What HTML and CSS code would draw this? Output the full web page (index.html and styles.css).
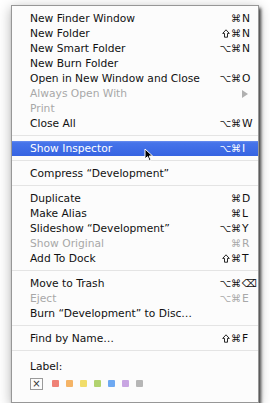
FILE: index.html
```html
<!DOCTYPE html>
<html lang="en">
<head>
  <meta charset="UTF-8">
  <title>Finder File Menu</title>
  <link rel="stylesheet" href="styles.css">
</head>
<body>
  <div class="menu">
    <div class="item"><span class="label">New Finder Window</span><span class="keys"><span class="mods">⌘</span><span class="key">N</span></span></div>
    <div class="item"><span class="label">New Folder</span><span class="keys"><svg class="shift" width="8" height="9" viewBox="0 0 8 9"><path d="M4 0.8 L7.3 4.4 L5.5 4.4 L5.5 8.2 L2.5 8.2 L2.5 4.4 L0.7 4.4 Z" fill="none" stroke="currentColor" stroke-width="0.9" stroke-linejoin="round"/></svg><span class="mods">⌘</span><span class="key">N</span></span></div>
    <div class="item"><span class="label">New Smart Folder</span><span class="keys"><span class="mods">⌥⌘</span><span class="key">N</span></span></div>
    <div class="item"><span class="label">New Burn Folder</span></div>
    <div class="item"><span class="label">Open in New Window and Close</span><span class="keys"><span class="mods">⌥⌘</span><span class="key">O</span></span></div>
    <div class="item disabled"><span class="label">Always Open With</span><span class="arrow"></span></div>
    <div class="item disabled"><span class="label">Print</span></div>
    <div class="item"><span class="label">Close All</span><span class="keys"><span class="mods">⌥⌘</span><span class="key">W</span></span></div>
    <div class="separator"></div>
    <div class="item selected"><span class="label">Show Inspector</span><span class="keys"><span class="mods">⌥⌘</span><span class="key">I</span></span></div>
    <div class="separator"></div>
    <div class="item"><span class="label">Compress “Development”</span></div>
    <div class="separator"></div>
    <div class="item"><span class="label">Duplicate</span><span class="keys"><span class="mods">⌘</span><span class="key">D</span></span></div>
    <div class="item"><span class="label">Make Alias</span><span class="keys"><span class="mods">⌘</span><span class="key">L</span></span></div>
    <div class="item"><span class="label">Slideshow “Development”</span><span class="keys"><span class="mods">⌥⌘</span><span class="key">Y</span></span></div>
    <div class="item disabled"><span class="label">Show Original</span><span class="keys"><span class="mods">⌘</span><span class="key">R</span></span></div>
    <div class="item"><span class="label">Add To Dock</span><span class="keys"><svg class="shift" width="8" height="9" viewBox="0 0 8 9"><path d="M4 0.8 L7.3 4.4 L5.5 4.4 L5.5 8.2 L2.5 8.2 L2.5 4.4 L0.7 4.4 Z" fill="none" stroke="currentColor" stroke-width="0.9" stroke-linejoin="round"/></svg><span class="mods">⌘</span><span class="key">T</span></span></div>
    <div class="separator"></div>
    <div class="item"><span class="label">Move to Trash</span><span class="keys"><span class="mods">⌥⌘</span><span class="key">⌫</span></span></div>
    <div class="item disabled"><span class="label">Eject</span><span class="keys"><span class="mods">⌥⌘</span><span class="key">E</span></span></div>
    <div class="item"><span class="label">Burn “Development” to Disc…</span></div>
    <div class="separator"></div>
    <div class="item"><span class="label">Find by Name…</span><span class="keys"><svg class="shift" width="8" height="9" viewBox="0 0 8 9"><path d="M4 0.8 L7.3 4.4 L5.5 4.4 L5.5 8.2 L2.5 8.2 L2.5 4.4 L0.7 4.4 Z" fill="none" stroke="currentColor" stroke-width="0.9" stroke-linejoin="round"/></svg><span class="mods">⌘</span><span class="key">F</span></span></div>
    <div class="separator"></div>
    <div class="label-title">Label:</div>
    <div class="swatches">
      <span class="swatch-none">×</span>
      <span class="swatch red"></span>
      <span class="swatch orange"></span>
      <span class="swatch yellow"></span>
      <span class="swatch green"></span>
      <span class="swatch blue"></span>
      <span class="swatch purple"></span>
      <span class="swatch gray"></span>
    </div>

    <svg class="cursor" width="10" height="14" viewBox="0 0 10 14">
      <path d="M1 1 L1 11 L3.5 8.6 L5.4 12.8 L7 12.1 L5.2 8 L8.6 8 Z" fill="#000" stroke="#fff" stroke-width="1" stroke-linejoin="round"/>
    </svg>
  </div>
</body>
</html>
```

FILE: styles.css
```css
body {
  margin: 0;
  padding: 0;
  background: #fff;
  font-family: "DejaVu Sans", Verdana, sans-serif;
  font-size: 10.7px;
  color: #111;
}

.menu {
  position: relative;
  width: 246px;
  margin: 5px 0 0 11px;
  padding: 5px 0 13px 0;
  background: #fcfcfc;
  border: 1px solid rgba(0, 0, 0, 0.4);
  box-shadow: 2px 3px 3px rgba(0, 0, 0, 0.7), 0 3px 12px rgba(0, 0, 0, 0.3);
}

.item {
  display: flex;
  align-items: center;
  height: 15px;
  padding: 0 4px 0 18px;
  white-space: nowrap;
}

.item .label {
  flex: 1;
}

.item.disabled {
  color: #a8a8a8;
}

.item.selected {
  background: linear-gradient(to bottom, #6b90ef 0%, #4674ea 12%, #3664e2 100%);
  color: #fff;
}

.keys {
  display: flex;
  align-items: center;
}

.mods {
  font-size: 10px;
}

.shift {
  margin-right: 1px;
}

.key {
  width: 12px;
  padding-left: 1px;
}

.arrow {
  width: 0;
  height: 0;
  margin-right: 6px;
  border-top: 4px solid transparent;
  border-bottom: 4px solid transparent;
  border-left: 6px solid #b0b0b0;
}

.separator {
  height: 1px;
  margin: 4px 0 5px 0;
  background: #e4e4e4;
}

.label-title {
  height: 15px;
  line-height: 15px;
  padding: 3px 0 0 18px;
}

.swatches {
  display: flex;
  align-items: center;
  height: 11px;
  margin-top: 4px;
  padding-left: 18px;
}

.swatch-none {
  display: flex;
  align-items: center;
  justify-content: center;
  width: 11px;
  height: 10px;
  margin-right: 9px;
  border: 1px solid #9a9a9a;
  font-size: 10px;
  line-height: 1;
  color: #333;
}

.swatch {
  width: 7px;
  height: 7px;
  margin-right: 7px;
  border-radius: 1px;
}

.red { background: #ef8176; }
.orange { background: #f5b466; }
.yellow { background: #f1dd6a; }
.green { background: #b2d36f; }
.blue { background: #6ea9f2; }
.purple { background: #c8a5e2; }
.gray { background: #b6b6b6; }

.cursor {
  position: absolute;
  left: 132px;
  top: 142px;
}
```
